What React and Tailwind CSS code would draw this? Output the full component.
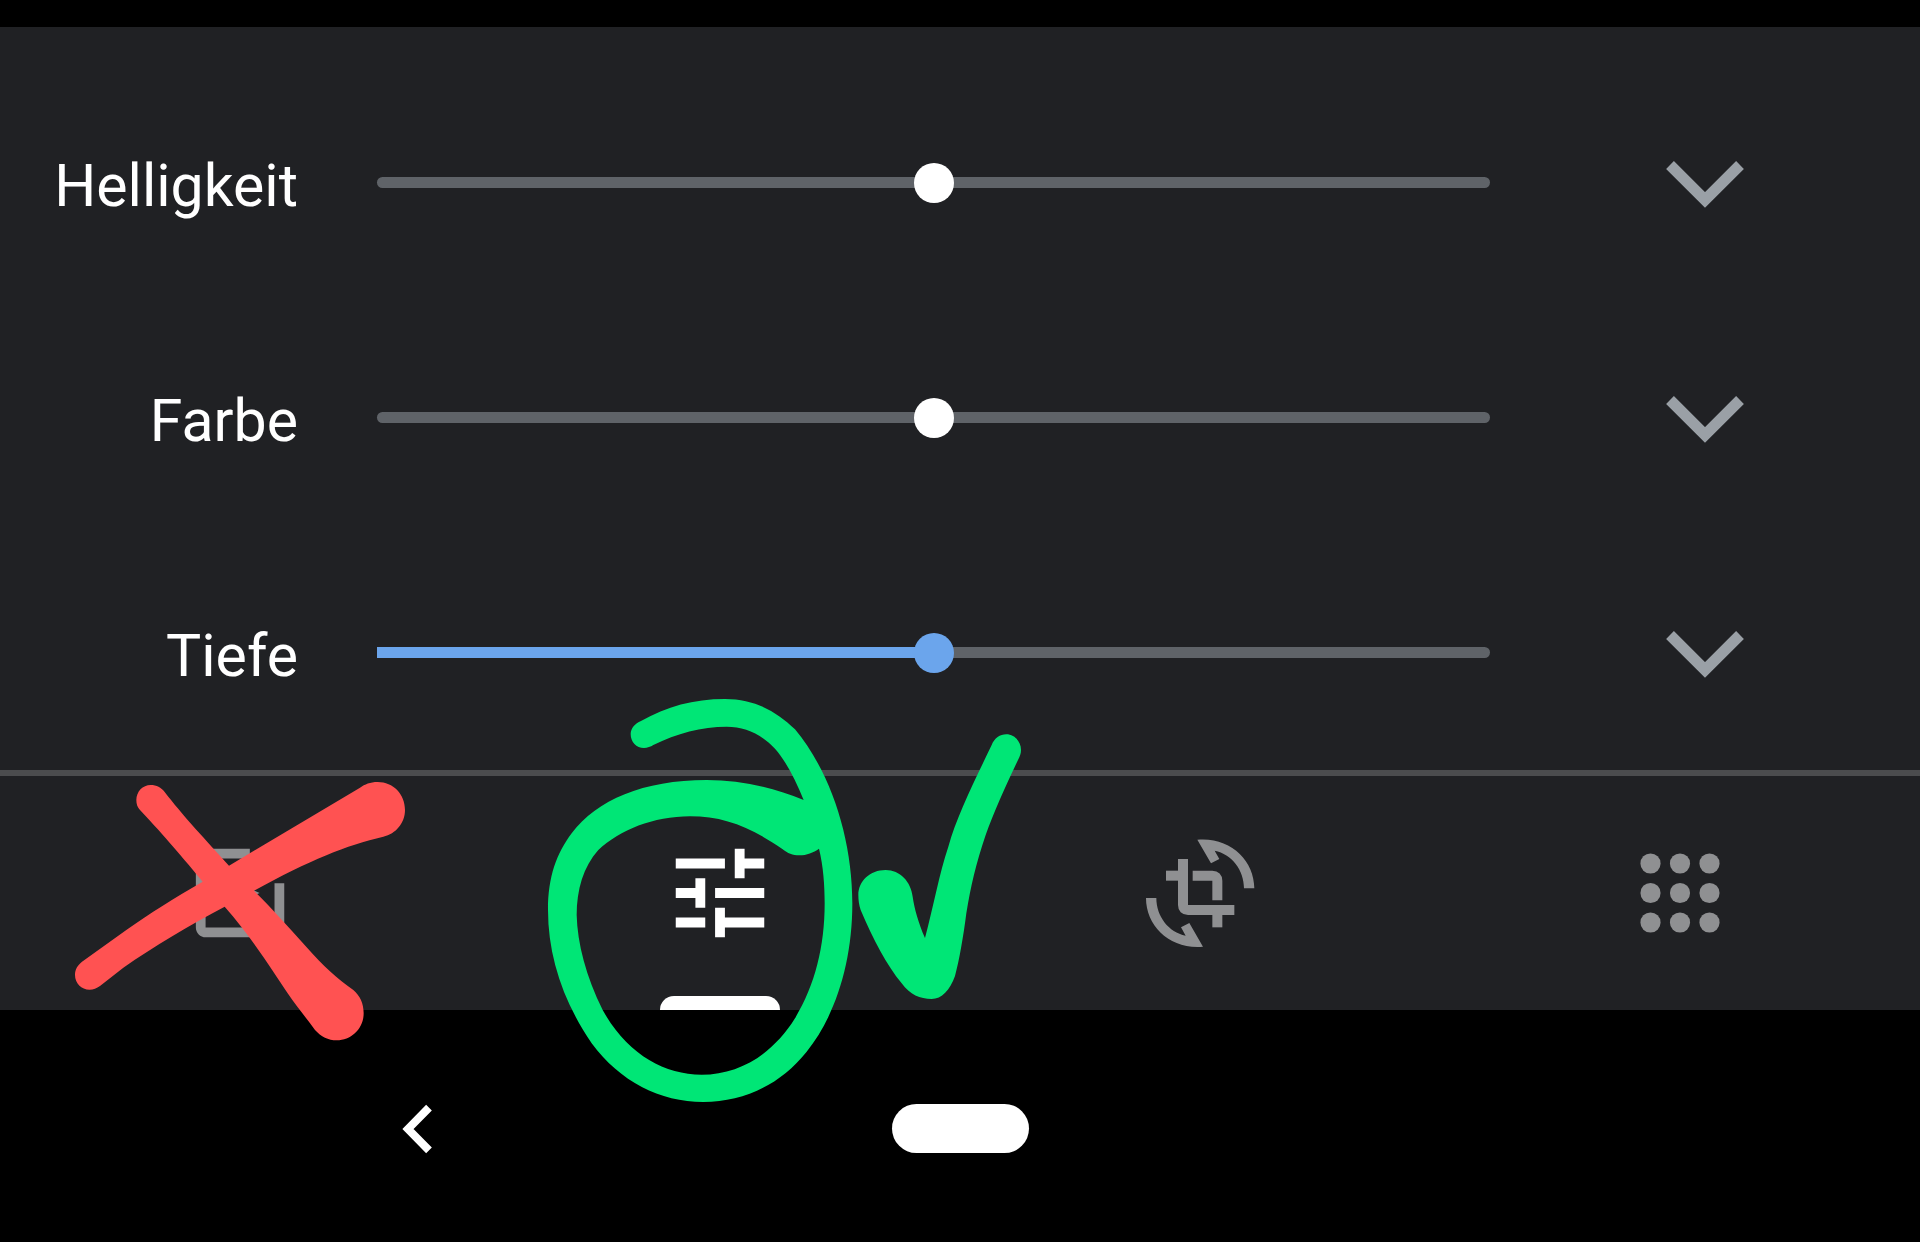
import React, { useState } from "react";
import clsx from "clsx";

const sliders = [
  { id: "helligkeit", label: "Helligkeit", active: false },
  { id: "farbe", label: "Farbe", active: false },
  { id: "tiefe", label: "Tiefe", active: true },
];

const PhotoFilterIcon = () => (
  <svg viewBox="0 0 24 24" className="size-[118px] fill-current" aria-hidden="true">
    <path d="M19.02 10v9H5V5h9V3H5.02c-1.1 0-2 .9-2 2v14c0 1.1.9 2 2 2H19c1.1 0 2-.9 2-2v-9h-1.98zM17 10l.94-2.06L20 7l-2.06-.94L17 4l-.94 2.06L14 7l2.06.94L17 10zm-3.75.75L12 8l-1.25 2.75L8 12l2.75 1.25L12 16l1.25-2.75L16 12l-2.75-1.25z" />
  </svg>
);

const TuneIcon = () => (
  <svg viewBox="0 0 24 24" className="size-[118px] fill-current" aria-hidden="true">
    <path d="M3 17v2h6v-2H3zM3 5v2h10V5H3zm10 16v-2h8v-2h-8v-2h-2v6h2zM7 9v2H3v2h4v2h2V9H7zm14 4v-2H11v2h10zm-6-4h2V7h4V5h-4V3h-2v6z" />
  </svg>
);

const CropRotateIcon = () => {
  const arrow =
    "M372 205C372 150 335 102 284 92L298 117L273 130L232 59C330 50 403 120 403 205Z";

  return (
    <svg viewBox="63 42 354 354" className="size-[118px]" aria-hidden="true">
      <g fill="none" stroke="currentColor" strokeWidth="30">
        <path d="M189 117V255Q189 270 204 270H343" />
        <path d="M138 167H189" />
        <path d="M218 167H277Q292 167 292 182V241" />
        <path d="M292 270V322" />
      </g>
      <path d={arrow} fill="currentColor" />
      <path d={arrow} fill="currentColor" transform="rotate(180 240.5 219.5)" />
    </svg>
  );
};

const DotsIcon = () => (
  <svg viewBox="0 0 24 24" className="size-[118px] fill-current" aria-hidden="true">
    {[6, 12, 18].map((y) =>
      [6, 12, 18].map((x) => <circle key={`${x}-${y}`} cx={x} cy={y} r="2.05" />)
    )}
  </svg>
);

const CrossMark = () => (
  <svg
    viewBox="0 429 1080 900"
    className="pointer-events-none absolute top-1/2 left-1/2 z-10 h-[300px] w-[360px] max-w-none -translate-1/2 fill-[#ff5252]"
    aria-hidden="true"
  >
    <path d="M229 600C229 575 248 555 272 555C290 555 303 562 314 576C370 648 410 690 507 797L900 563C915 553 930 546 953 546C1000 546 1035 583 1035 630C1035 668 1008 702 970 710C860 735 750 780 582 872C640 930 680 975 740 1042C790 1098 830 1135 880 1170C900 1187 911 1210 911 1240C911 1285 875 1321 830 1321C805 1321 783 1310 765 1290C740 1255 710 1220 683 1180C640 1115 570 1005 494 920C390 975 280 1040 190 1103L120 1158C110 1165 100 1169 89 1169C64 1169 45 1150 45 1125C45 1108 52 1097 66 1085L200 989C270 940 340 895 428 845C370 775 320 715 240 630C232 621 229 612 229 600Z" />
  </svg>
);

const CircleAndCheckMark = () => (
  <svg
    viewBox="-360 0 1860 1278"
    className="pointer-events-none absolute top-1/2 left-1/2 z-10 h-[426px] w-[620px] max-w-none -translate-1/2 fill-[#00e676]"
    aria-hidden="true"
  >
    <path
      fillRule="evenodd"
      d="M302 162C302 145 315 130 333 123C410 80 490 57 585 57C675 57 740 95 795 148C905 280 967 480 967 670C967 850 915 1010 830 1115C750 1215 640 1266 520 1266C390 1266 270 1205 185 1090C100 965 54 830 54 690C54 590 80 520 125 460C200 360 340 300 530 300C630 300 730 322 821 360C795 295 765 240 735 206C690 160 645 140 590 140C515 140 440 160 370 195C362 200 352 204 342 204C319 204 302 186 302 162ZM867 506C850 518 830 526 808 526C788 526 773 520 757 507C660 440 580 409 480 409C370 409 270 450 205 510C160 560 140 630 140 705C142 790 168 890 218 990C290 1120 400 1184 515 1184C630 1184 730 1120 795 1015C855 915 884 800 884 670C884 615 880 560 867 506Z"
    />
    <path
      transform="translate(870 60)"
      d="M115 585C115 543 150 510 197 510C240 510 273 545 278 590C283 625 295 668 315 714C340 620 358 520 385 440C410 350 460 250 515 135C523 115 540 103 559 103C583 103 603 124 603 150C603 160 600 168 594 180C560 250 520 340 497 405C468 490 452 560 439 640C430 710 418 780 405 828C390 870 365 897 335 897C300 897 270 885 245 850C200 795 160 720 122 630C117 615 115 600 115 585Z"
    />
  </svg>
);

const tabs = [
  { id: "filter", label: "Filter", Icon: PhotoFilterIcon, Mark: CrossMark },
  { id: "tune", label: "Anpassen", Icon: TuneIcon, Mark: CircleAndCheckMark },
  { id: "crop", label: "Zuschneiden", Icon: CropRotateIcon },
  { id: "more", label: "Mehr", Icon: DotsIcon },
];

const SliderRow = ({ id, label, active }) => {
  const [value, setValue] = useState(50);
  const fill = active ? "#6ba5ec" : "#5f6368";

  return (
    <div className="flex h-[235px] items-center">
      <label htmlFor={id} className="w-[298px] pt-[6px] text-right text-[59px] leading-[72px]">
        {label}
      </label>
      <input
        id={id}
        type="range"
        min="0"
        max="100"
        value={value}
        onChange={(e) => setValue(Number(e.target.value))}
        style={{
          backgroundImage: `linear-gradient(to right, ${fill} ${value}%, #5f6368 ${value}%)`,
        }}
        className={clsx(
          "ml-[79px] h-[11px] min-w-0 flex-1 appearance-none outline-none",
          "[&::-webkit-slider-thumb]:size-[40px] [&::-webkit-slider-thumb]:appearance-none [&::-webkit-slider-thumb]:rounded-full",
          active
            ? "rounded-r-full [&::-webkit-slider-thumb]:bg-[#6ba5ec]"
            : "rounded-full [&::-webkit-slider-thumb]:bg-white"
        )}
      />
      <button
        type="button"
        aria-label={`${label} erweitern`}
        className="flex h-full w-[430px] shrink-0 items-center justify-center text-[#9aa0a6]"
      >
        <svg viewBox="678 85 234 150" className="h-[50px] w-[78px]" aria-hidden="true">
          <polyline
            points="690,106 795,211 900,106"
            fill="none"
            stroke="currentColor"
            strokeWidth="33"
          />
        </svg>
      </button>
    </div>
  );
};

const App = () => {
  const [activeTab, setActiveTab] = useState("tune");

  return (
    <div className="min-h-screen overflow-x-hidden bg-black pt-[27px] font-[Roboto,sans-serif] text-white">
      <main className="bg-[#202124]">
        <section className="pt-[38px]">
          {sliders.map((slider) => (
            <SliderRow key={slider.id} {...slider} />
          ))}
        </section>

        <div className="grid grid-cols-4 border-t-[6px] border-[#4b4c4e]">
          {tabs.map(({ id, label, Icon, Mark }) => (
            <button
              key={id}
              type="button"
              aria-label={label}
              onClick={() => setActiveTab(id)}
              className={clsx(
                "relative flex h-[234px] items-center justify-center",
                activeTab === id ? "text-white" : "text-[#8f9092]"
              )}
            >
              <Icon />
              {activeTab === id && (
                <span className="absolute bottom-0 left-1/2 h-[14px] w-[120px] -translate-x-1/2 rounded-t-[14px] bg-white" />
              )}
              {Mark && <Mark />}
            </button>
          ))}
        </div>
      </main>

      <nav className="grid grid-cols-[1fr_252px_1fr] justify-items-center pt-[94px]">
        <button type="button" aria-label="Zurück">
          <svg viewBox="120 71 105 150" className="h-[50px] w-[35px]" aria-hidden="true">
            <polyline
              points="207,82 144,146 207,210"
              fill="none"
              stroke="white"
              strokeWidth="24"
            />
          </svg>
        </button>
        <button
          type="button"
          aria-label="Startbildschirm"
          className="h-[49px] w-[137px] rounded-full bg-white"
        />
      </nav>
    </div>
  );
};

export default App;
